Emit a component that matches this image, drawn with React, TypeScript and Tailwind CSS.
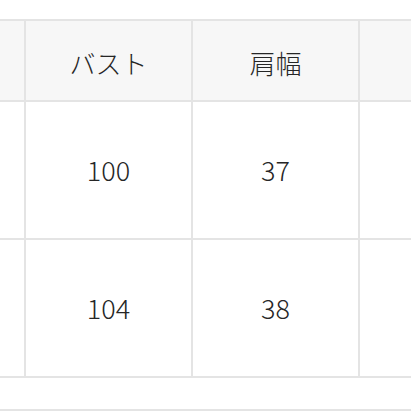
import React from "react";

const headers = ["", "バスト", "肩幅", ""];
const rows = [
  ["", "100", "37", ""],
  ["", "104", "38", ""],
];

const cols = "grid grid-cols-[26px_167px_167px_1fr]";

export default function App() {
  return (
    <div
      className="w-[411px] h-[411px] bg-white overflow-hidden pt-[19px] text-[#262626]"
      style={{ fontFamily: '"Noto Sans CJK JP", "Noto Sans", sans-serif' }}
    >
      <div className="border-t-2 border-[#e4e4e4]">
        <div className={`${cols} h-[81px] bg-[#f7f7f7] border-b-2 border-[#e4e4e4]`}>
          {headers.map((h, i) => (
            <div
              key={i}
              className={`flex items-center justify-center text-[26px] font-light pt-[4px] ${i < 3 ? "border-r-2 border-[#e4e4e4]" : ""}`}
            >
              {h}
            </div>
          ))}
        </div>
        {rows.map((r, ri) => (
          <div key={ri} className={`${cols} h-[138px] border-b-2 border-[#e4e4e4]`}>
            {r.map((c, i) => (
              <div
                key={i}
                className={`flex items-center justify-center text-[27px] font-light ${i < 3 ? "border-r-2 border-[#e4e4e4]" : ""}`}
              >
                {c}
              </div>
            ))}
          </div>
        ))}
      </div>
      <div className="mt-[31px] border-t-2 border-[#e4e4e4]" />
    </div>
  );
}
